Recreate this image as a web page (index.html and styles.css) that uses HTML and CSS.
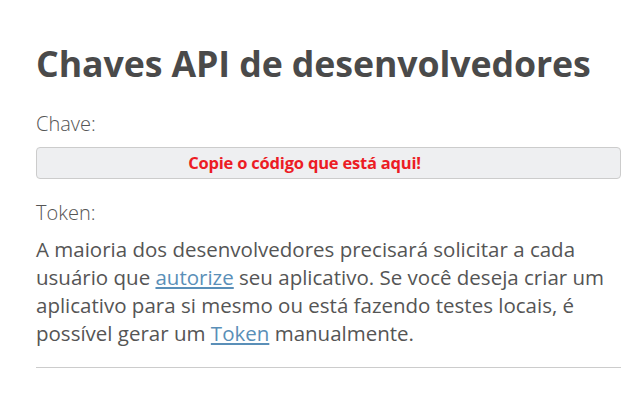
FILE: index.html
```html
<!DOCTYPE html>
<html lang="pt">
<head>
<meta charset="utf-8">
<title>Chaves API de desenvolvedores</title>
<link rel="stylesheet" href="styles.css">
</head>
<body>
<main class="page">
  <h1 class="title">Chaves API de desenvolvedores</h1>
  <div class="label">Chave:</div>
  <div class="key-box">Copie o código que está aqui!</div>
  <div class="label label-token">Token:</div>
  <p class="info">A maioria dos desenvolvedores precisará solicitar a cada usuário que <a href="#" class="link">autorize</a> seu aplicativo. Se você deseja criar um aplicativo para si mesmo ou está fazendo testes locais, é possível gerar um <a href="#" class="link">Token</a> manualmente.</p>
  <hr class="divider">
</main>
</body>
</html>
```
FILE: styles.css
```css
html, body {
  margin: 0;
  padding: 0;
  background: #ffffff;
}
.page {
  padding: 41px 18px 0 36px;
  font-family: "Open Sans", "Noto Sans", sans-serif;
  color: #555555;
}
.title {
  margin: 0;
  font-size: 35.7px;
  line-height: 44px;
  font-weight: 700;
  color: #4a4a4a;
  letter-spacing: -0.1px;
}
.label {
  margin-top: 25px;
  font-size: 20px;
  line-height: 28px;
  font-weight: 300;
  color: #555555;
}
.label-token {
  margin-top: 20px;
}
.key-box {
  margin-top: 9px;
  box-sizing: border-box;
  height: 32px;
  border: 1px solid #cccccc;
  border-radius: 4px;
  background: #eeeff1;
  padding-right: 48px;
  text-align: center;
  font-size: 16.5px;
  line-height: 29px;
  font-weight: 700;
  color: #ec1c24;
  letter-spacing: -0.2px;
}
.info {
  margin: 8px 0 0;
  font-size: 20.5px;
  line-height: 28px;
  font-weight: 400;
  color: #555555;
}
.link {
  display: inline-block;
  line-height: 26px;
  color: #5a8fb8;
  text-decoration: underline;
}
.divider {
  margin: 20px 0 0;
  border: 0;
  border-top: 1px solid #cccccc;
  height: 0;
}
```
